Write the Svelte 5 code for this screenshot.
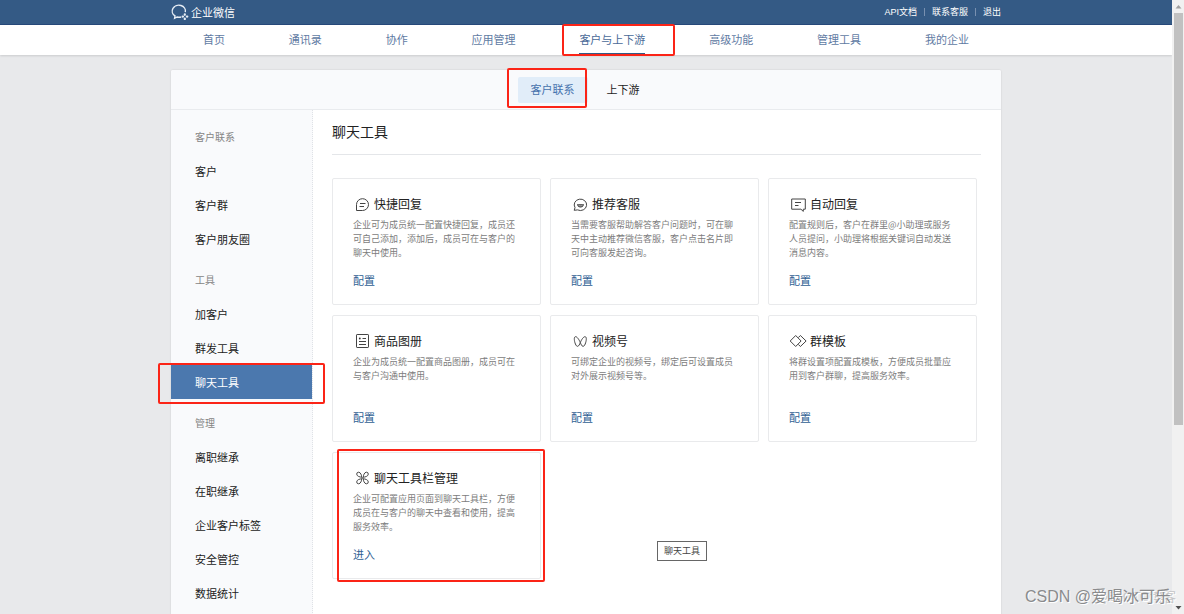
<script lang="ts">
  interface Card {
    icon: string;
    title: string;
    text: string;
    action: string;
    marked?: boolean;
  }

  const account = ['API文档', '联系客服', '退出'];

  const nav = ['首页', '通讯录', '协作', '应用管理', '客户与上下游', '高级功能', '管理工具', '我的企业'];
  let activeNav = $state('客户与上下游');

  const tabs = ['客户联系', '上下游'];
  let activeTab = $state('客户联系');

  const groups = [
    { heading: '客户联系', items: ['客户', '客户群', '客户朋友圈'] },
    { heading: '工具', items: ['加客户', '群发工具', '聊天工具'] },
    { heading: '管理', items: ['离职继承', '在职继承', '企业客户标签', '安全管控', '数据统计'] },
  ];
  let activeItem = $state('聊天工具');

  const cards: Card[] = [
    { icon: 'reply', title: '快捷回复', text: '企业可为成员统一配置快捷回复，成员还可自己添加，添加后，成员可在与客户的聊天中使用。', action: '配置' },
    { icon: 'service', title: '推荐客服', text: '当需要客服帮助解答客户问题时，可在聊天中主动推荐微信客服，客户点击名片即可向客服发起咨询。', action: '配置' },
    { icon: 'auto', title: '自动回复', text: '配置规则后，客户在群里@小助理或服务人员提问，小助理将根据关键词自动发送消息内容。', action: '配置' },
    { icon: 'album', title: '商品图册', text: '企业为成员统一配置商品图册，成员可在与客户沟通中使用。', action: '配置' },
    { icon: 'channel', title: '视频号', text: '可绑定企业的视频号，绑定后可设置成员对外展示视频号等。', action: '配置' },
    { icon: 'template', title: '群模板', text: '将群设置项配置成模板，方便成员批量应用到客户群聊，提高服务效率。', action: '配置' },
    { icon: 'toolbar', title: '聊天工具栏管理', text: '企业可配置应用页面到聊天工具栏，方便成员在与客户的聊天中查看和使用，提高服务效率。', action: '进入', marked: true },
  ];
</script>

{#snippet cardIcon(name: string)}
  <svg class="icon" viewBox="0 0 18 16" width="18" height="16" aria-hidden="true">
    {#if name === 'reply'}
      <path d="M3.5 14.5V8.6A6 5.9 0 1 1 9.5 14.5Z" />
      <path d="M7 7.5h5.5M6.5 10.5h4.5" />
    {:else if name === 'service'}
      <path d="M3.2 14.3 4 11.6A6.2 5.7 0 1 1 6.6 13.9Z" />
      <path class="dot" d="M6 8.2h7c-.2 2-1.600 3.200-3.500 3.200S6.200 10.200 6 8.200Z" />
      <path class="smile" d="M7.500 9.300c.8.800 3.200.800 4 0" />
    {:else if name === 'auto'}
      <path d="M2.700 3h13.600v10.200h-2v2.200l-2.400-2.200H2.700Z" />
      <path d="M6 6.500h6M6 9.500h3.500" />
    {:else if name === 'album'}
      <rect x="3.500" y="1.500" width="12" height="13" rx=".6" />
      <path d="M6 11.500h7M6 8.500h7M9.500 5.500H13" />
      <circle class="dot" cx="6.800" cy="5.500" r=".9" />
    {:else if name === 'channel'}
      <path d="M9.300 9.500C8 6.500 6 3.400 4.400 3.700 2.700 4 3.200 8 4.400 11c.7 1.700 1.500 2.500 2.300 2.300C8 13 8.600 11.300 9.300 9.500Z" />
      <path d="M9.300 9.500c1.300-3 3.300-6.100 4.900-5.800 1.700.3 1.200 4.300 0 7.300-.7 1.700-1.500 2.500-2.300 2.300-1.300-.3-1.900-2-2.600-3.800Z" />
    {:else if name === 'template'}
      <path d="M6.700 2.500 12.100 8l-5.400 5.500L1.200 8Z" />
      <path d="m9.300 4.600 2.100-2.100L17.100 8l-5.700 5.500-2.100-2.100" />
    {:else}
      <path d="M8.700 7.200C7.200 7.200 3.700 6.300 3.700 4.100a1.900 1.900 0 0 1 1.900-1.900C7.800 2.200 8.700 5.700 8.700 7.200L10.300 8.800" />
      <path d="M10.300 7.200c0-1.500.9-5 3.100-5a1.900 1.900 0 0 1 1.900 1.900c0 2.200-3.500 3.100-5 3.100L8.700 8.800" />
      <path d="M10.300 8.800c1.500 0 5 .9 5 3.100a1.900 1.900 0 0 1-1.900 1.900c-2.200 0-3.100-3.500-3.100-5Z" />
      <path d="M8.700 8.800c0 1.500-.9 5-3.100 5a1.900 1.900 0 0 1-1.900-1.900c0-2.200 3.500-3.100 5-3.100Z" />
    {/if}
  </svg>
{/snippet}

<div class="window">
  <div class="page">
    <header class="topbar">
      <div class="inner">
        <a class="brand" href="#home">
          <svg viewBox="0 0 18 16" width="18" height="16" aria-hidden="true">
            <path d="M14.300 8.200A6.600 5.900 0 1 0 4 11.900l-.4 2.400 2.500-1.300c1.200.3 2.700.4 4 0" />
            <path class="petal" d="M13.800 10.300v.5M13.800 14.600v.4M11.600 12.600h.4M15.900 12.600h.4" />
          </svg>
          <span>企业微信</span>
        </a>
        <div class="account">
          {#each account as link}
            <a href="#account">{link}</a>
          {/each}
        </div>
      </div>
    </header>

    <nav class="mainNav">
      <div class="inner">
        {#each nav as item}
          <a href="#nav" class:active={item === activeNav} onclick={() => (activeNav = item)}>
            {item}
            {#if item === '客户与上下游'}<span class="mark markNav"></span>{/if}
          </a>
        {/each}
      </div>
    </nav>

    <div class="panel">
      <div class="tabs">
        {#each tabs as tab, index}
          <button class:active={tab === activeTab} onclick={() => (activeTab = tab)}>
            {tab}
            {#if index === 0}<span class="mark markTab"></span>{/if}
          </button>
        {/each}
      </div>

      <div class="body">
        <aside>
          {#each groups as group}
            <div class="group">
              <h3>{group.heading}</h3>
              {#each group.items as item}
                <a href="#menu" class:active={item === activeItem} onclick={() => (activeItem = item)}>
                  {item}
                  {#if item === '聊天工具'}<span class="mark markSide"></span>{/if}
                </a>
              {/each}
            </div>
          {/each}
        </aside>

        <main>
          <h1>聊天工具</h1>
          <div class="cards">
            {#each cards as card}
              <section class="card">
                <h2>{@render cardIcon(card.icon)}{card.title}</h2>
                <p>{card.text}</p>
                <a href="#config">{card.action}</a>
                {#if card.marked}<span class="mark markCard"></span>{/if}
              </section>
            {/each}
          </div>
          <div class="tooltip">聊天工具</div>
        </main>
      </div>
    </div>
  </div>

  <div class="scrollbar">
    <svg viewBox="0 0 12 13" width="12" height="13" aria-hidden="true"><path fill="#a0a0a0" d="M3.500 8.500h6l-3-3.500Z" /></svg>
    <div class="track"><div class="thumb"></div></div>
    <svg viewBox="0 0 12 13" width="12" height="13" aria-hidden="true"><path fill="#505050" d="M3.500 5h6l-3 3.500Z" /></svg>
  </div>

  <div class="watermark faint">@51CTO博客</div>
  <div class="watermark">CSDN @爱喝冰可乐</div>
</div>

<style>
  :global(body) {
    background: #e8e9eb;
    font-family: "Noto Sans CJK SC", "Liberation Sans", sans-serif;
    font-size: 11px;
    color: #222;
  }

  a {
    text-decoration: none;
    color: inherit;
  }

  h1,
  h2,
  h3,
  p {
    margin: 0;
    font-weight: normal;
  }

  .window {
    position: relative;
    display: flex;
    height: 100vh;
    overflow: hidden;
  }

  .page {
    flex: 1;
    min-width: 0;
  }

  .inner {
    display: flex;
    justify-content: space-between;
    max-width: 830px;
    margin: 0 auto;
  }

  .topbar {
    background: #345a85;
    border-bottom: 1px solid #27497a;
    color: #fff;

    & .inner {
      align-items: center;
      height: 24px;
    }
  }

  .brand {
    display: flex;
    align-items: center;
    gap: 2px;
    line-height: 14px;
    padding-bottom: 1px;

    & svg {
      fill: none;
      stroke: #e6edf5;
      stroke-width: 1.4;
    }

    & .petal {
      stroke-width: 2.2;
      stroke-linecap: round;
    }
  }

  .account {
    display: flex;
    font-family: "Liberation Sans", "Noto Sans CJK SC", sans-serif;
    font-size: 9px;
    line-height: 12px;

    & a + a {
      margin-left: 7px;
      display: flex;
      align-items: center;
    }

    & a + a::before {
      content: "";
      width: 1px;
      height: 8px;
      margin-right: 7px;
      background: #7890b0;
    }
  }

  .mainNav {
    background: #fff;
    box-shadow: 0 1px 2px rgba(0, 0, 0, 0.12);

    & .inner {
      box-sizing: border-box;
      padding: 0 32px;
    }

    & a {
      position: relative;
      height: 28px;
      line-height: 29px;
      color: #5f7ba3;
      white-space: nowrap;
      border-bottom: 2px solid transparent;
    }

    & a.active {
      color: #4a6a98;
      border-color: #345a85;
    }
  }

  .panel {
    max-width: 830px;
    margin: 15px auto 0;
    background: #fff;
    border-radius: 2px;
    box-shadow: 0 0 2px rgba(0, 0, 0, 0.14);
  }

  .tabs {
    display: flex;
    justify-content: center;
    align-items: center;
    gap: 6px;
    height: 39px;
    padding-right: 2px;
    background: #f9fafc;
    border-bottom: 1px solid #e9ebee;
    border-radius: 2px 2px 0 0;

    & button {
      position: relative;
      height: 26px;
      padding: 0 13px 1px;
      border: none;
      border-radius: 2px;
      background: none;
      color: #222;
      font: inherit;
      cursor: pointer;
    }

    & button.active {
      background: #e1edf9;
      color: #4672ad;
    }
  }

  .body {
    display: flex;
  }

  aside {
    box-sizing: border-box;
    flex: 0 0 142px;
    padding: 10px 0;
    background: #f9fafc;
    border-right: 1px dotted #dfe2e6;

    & h3,
    & a {
      display: block;
      position: relative;
      padding-left: 24px;
      line-height: 34px;
    }

    & h3 {
      font-size: 10px;
      color: #858585;
    }

    & a.active {
      background: #4b78ae;
      color: #fff;
    }
  }

  .group {
    margin-bottom: 7px;
  }

  main {
    position: relative;
    flex: 1;
    min-width: 0;
    padding: 0 20px 0 19px;
  }

  h1 {
    font-size: 14px;
    line-height: 42px;
    padding-bottom: 2px;
    border-bottom: 1px solid #e4e6e9;
  }

  .cards {
    display: grid;
    grid-template-columns: repeat(3, 1fr);
    gap: 10px 9px;
    padding: 23px 4px 23px 0;
  }

  .card {
    position: relative;
    padding: 15px 20px;
    border: 1px solid #e9eaec;
    border-radius: 2px;

    & h2 {
      display: flex;
      align-items: center;
      gap: 3px;
      font-size: 12px;
      line-height: 20px;
    }

    & p {
      min-height: 42px;
      margin: 4px 0 12px;
      font-size: 9px;
      line-height: 14px;
      color: #7c7c7c;
    }

    & a {
      display: block;
      padding-bottom: 1px;
      line-height: 16px;
      color: #2f6093;
    }
  }

  .icon {
    fill: none;
    stroke: #444;
    stroke-width: 1;
    stroke-linejoin: round;

    & .dot {
      fill: #333;
      stroke: none;
    }

    & .smile {
      stroke: #fff;
      stroke-width: 0.8;
    }
  }

  .tooltip {
    position: absolute;
    left: 344px;
    top: 431px;
    padding: 0 6px;
    border: 1px solid #666;
    background: #fff;
    font-size: 9px;
    line-height: 18px;
    color: #444;
  }

  /* red highlight frames */
  .mark {
    position: absolute;
    z-index: 2;
    border: 2px solid #fb2417;
    border-radius: 2px;
    pointer-events: none;
  }

  .markNav {
    inset: -1px -30px -3px -17px;
  }

  .markTab {
    inset: -9px 1px -5px -11px;
  }

  .markSide {
    inset: -2px -13px -5px -13px;
  }

  .markCard {
    inset: -4px -5px -4px 4px;
  }

  .scrollbar {
    flex: 0 0 12px;
    display: flex;
    flex-direction: column;
    background: #f1f1f1;
  }

  .track {
    flex: 1;
    padding: 0 1px 0 2px;
  }

  .thumb {
    height: 70%;
    background: #c1c1c1;
  }

  .watermark {
    position: absolute;
    right: 13px;
    bottom: 5px;
    z-index: 3;
    font-family: "Liberation Sans", "Noto Sans CJK SC", sans-serif;
    font-size: 16px;
    line-height: 24px;
    color: #8a8b8d;
    text-shadow: 1px 1px 0 #fff;
    pointer-events: none;
  }

  .faint {
    right: 8px;
    font-size: 13px;
    color: #c4c5c7;
  }
</style>
